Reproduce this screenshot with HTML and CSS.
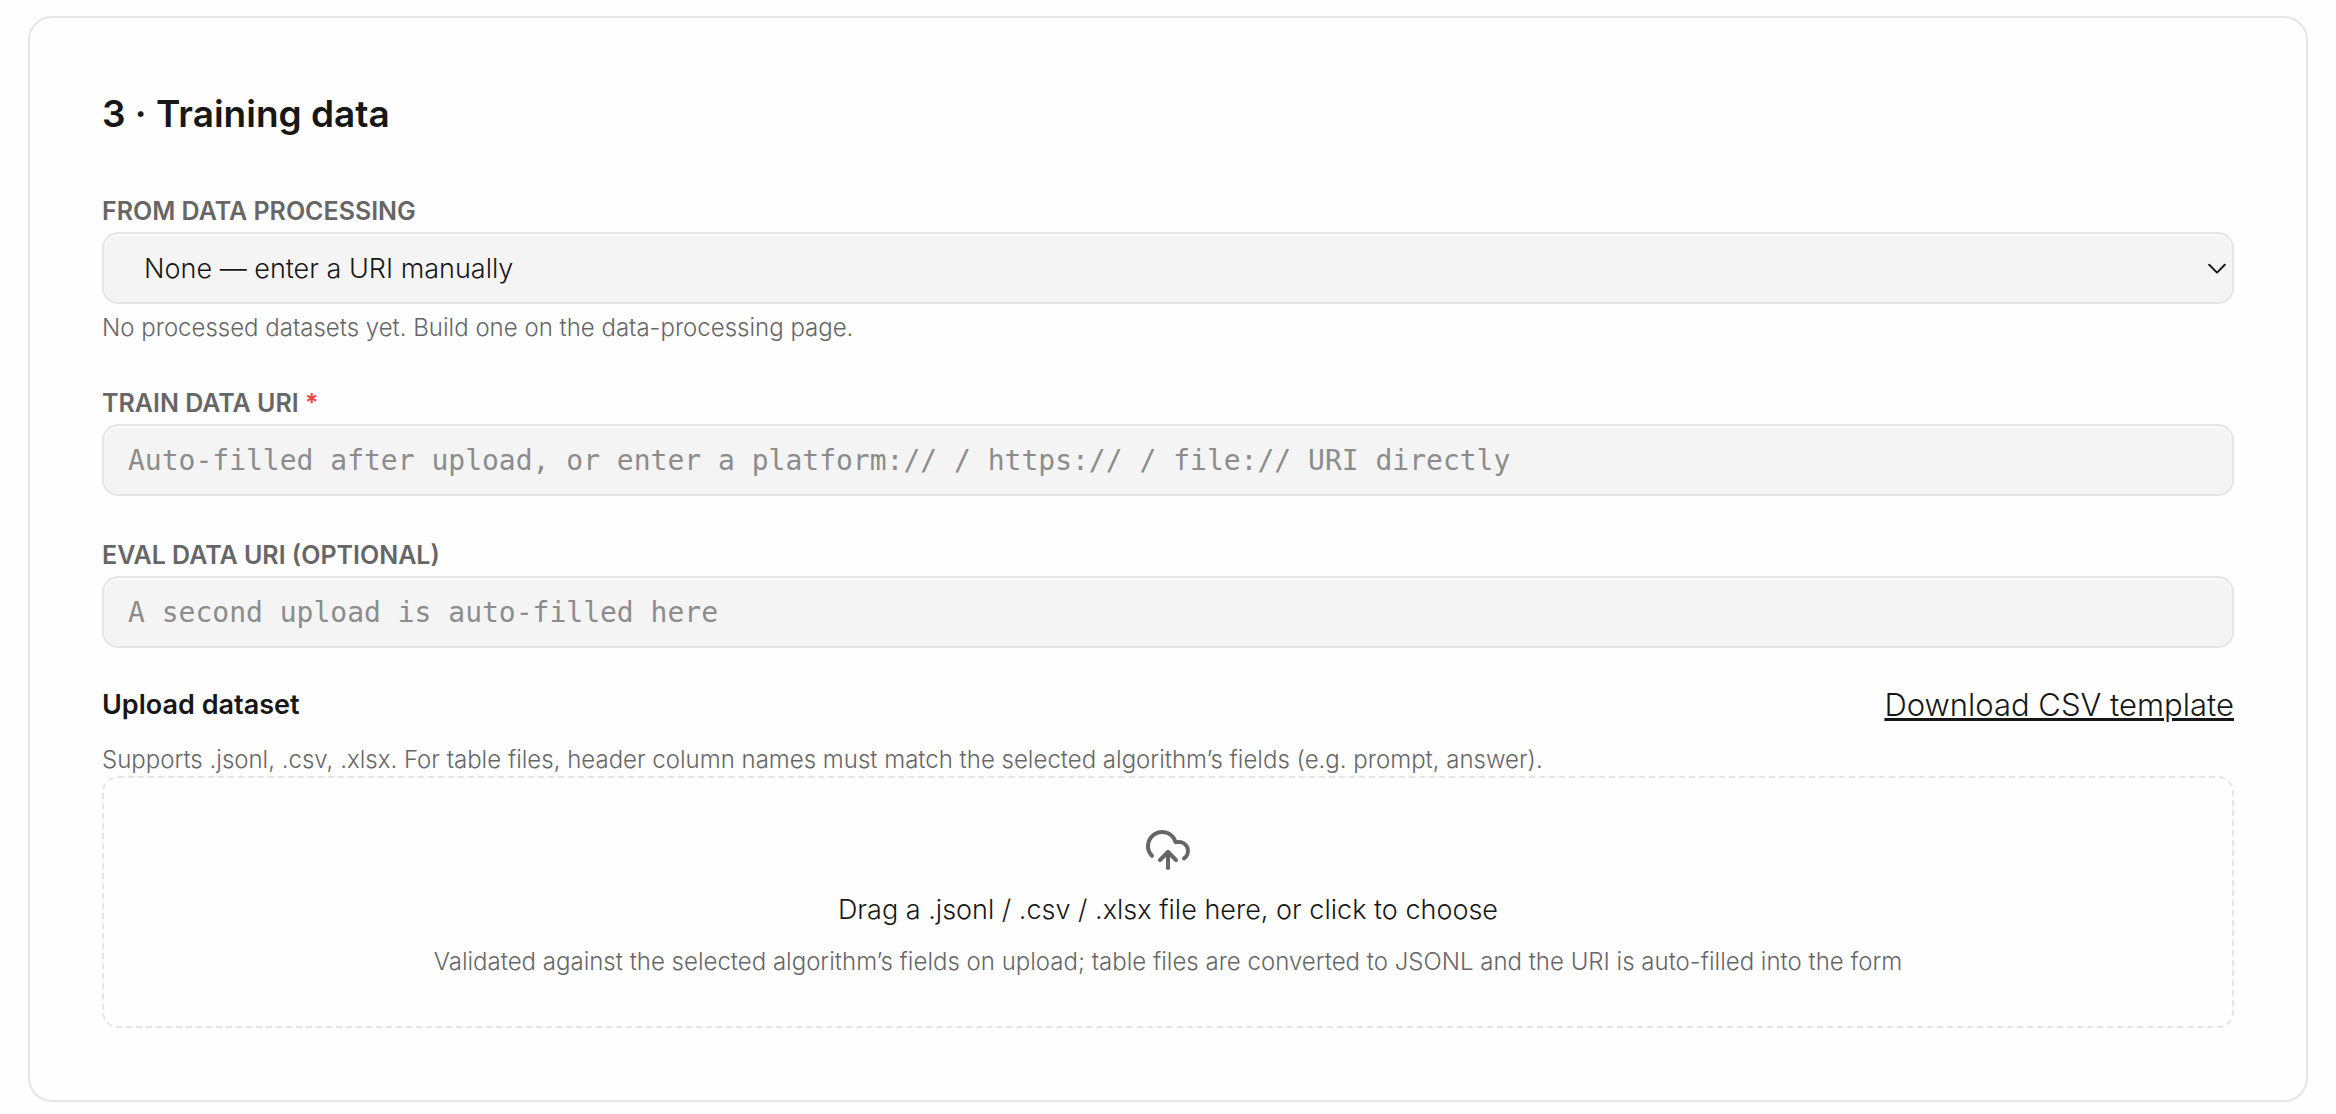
FILE: index.html
```html
<!DOCTYPE html>
<html lang="en">
<head>
<meta charset="utf-8">
<meta name="viewport" content="width=device-width, initial-scale=1">
<title>Training data</title>
<link rel="stylesheet" href="styles.css">
</head>
<body>
<section class="card">
  <h2 class="card-title">3 · Training data</h2>
  <div class="fields">
    <div class="field">
      <label class="label" for="source">FROM DATA PROCESSING</label>
      <div class="select-wrap">
        <select class="control select" id="source">
          <option>None — enter a URI manually</option>
        </select>
        <svg class="chevron" viewBox="0 0 18 12" aria-hidden="true"><path d="M1.2 1.8 9 9.6l7.800-7.800"/></svg>
      </div>
      <p class="hint field-hint">No processed datasets yet. Build one on the data-processing page.</p>
    </div>
    <div class="field">
      <label class="label" for="train">TRAIN DATA URI <span class="required">*</span></label>
      <input class="control mono" id="train" type="text" placeholder="Auto-filled after upload, or enter a platform:// / https:// / file:// URI directly">
    </div>
    <div class="field">
      <label class="label" for="eval">EVAL DATA URI (OPTIONAL)</label>
      <input class="control mono" id="eval" type="text" placeholder="A second upload is auto-filled here">
    </div>
  </div>
  <div class="upload">
    <div class="upload-head">
      <h3 class="upload-title">Upload dataset</h3>
      <a class="template-link" href="#">Download CSV template</a>
    </div>
    <p class="hint">Supports .jsonl, .csv, .xlsx. For table files, header column names must match the selected algorithm’s fields (e.g. prompt, answer).</p>
    <button class="dropzone" type="button">
      <svg class="cloud" viewBox="0 0 24 24" aria-hidden="true"><path d="M12 13v8"/><path d="M4 14.899A7 7 0 1 1 15.71 8h1.790a4.500 4.500 0 0 1 2.500 8.242"/><path d="m8 17 4-4 4 4"/></svg>
      <span class="drop-title">Drag a .jsonl / .csv / .xlsx file here, or click to choose</span>
      <span class="hint">Validated against the selected algorithm’s fields on upload; table files are converted to JSONL and the URI is auto-filled into the form</span>
    </button>
  </div>
</section>
</body>
</html>
```
FILE: styles.css
```css
* { box-sizing: border-box; }

body {
  margin: 0;
  padding: 16px 28px 12px;
  background: #fefefe;
  color: #171717;
  font-family: "Inter", "Liberation Sans", sans-serif;
  font-weight: 300;
}

.card {
  padding: 72px;
  border: 2px solid #e5e5e5;
  border-radius: 24px;
}

.card-title {
  margin: 0 0 56px;
  font-size: 37px;
  line-height: 48px;
  font-weight: 600;
}

.fields {
  display: flex;
  flex-direction: column;
  gap: 42px;
}

.label {
  display: block;
  margin-bottom: 4px;
  color: #666;
  font-size: 25px;
  line-height: 34px;
  font-weight: 600;
}

.required { color: #ef4444; }

.control {
  display: block;
  width: 100%;
  height: 72px;
  padding: 0 24px;
  border: 2px solid #e5e5e5;
  border-radius: 16px;
  background: #f4f4f4;
  box-shadow: inset 0 2px 0 #fbfbfb;
  color: #171717;
  font: inherit;
  font-size: 27px;
}

.select-wrap { position: relative; }

.select {
  padding: 0 40px;
  appearance: none;
}

.chevron {
  position: absolute;
  top: 31px;
  right: 8px;
  width: 18px;
  height: 12px;
  fill: none;
  stroke: #171717;
  stroke-width: 2;
  stroke-linecap: round;
  stroke-linejoin: round;
  pointer-events: none;
}

.mono {
  font-family: "DejaVu Sans Mono", "Liberation Mono", monospace;
  font-size: 28px;
}

.mono::placeholder {
  color: #8c8c8c;
  opacity: 1;
}

.hint {
  margin: 0;
  color: #666;
  font-size: 24px;
  line-height: 32px;
}

.field-hint { margin-top: 8px; }

.upload { margin-top: 32px; }

.upload-head {
  display: flex;
  justify-content: space-between;
  align-items: center;
  margin-bottom: 14px;
  line-height: 50px;
}

.upload-title {
  margin: 0;
  font-size: 27px;
  font-weight: 600;
}

.template-link {
  color: inherit;
  font-size: 31px;
  text-decoration-thickness: 3px;
}

.dropzone {
  display: flex;
  flex-direction: column;
  align-items: center;
  gap: 16px;
  width: 100%;
  padding: 48px;
  border: 2px dashed #e5e5e5;
  border-radius: 16px;
  background: transparent;
  color: inherit;
  font: inherit;
}

.cloud {
  width: 48px;
  height: 48px;
  fill: none;
  stroke: #666;
  stroke-width: 2;
  stroke-linecap: round;
  stroke-linejoin: round;
}

.drop-title {
  font-size: 27px;
  line-height: 40px;
}
```
